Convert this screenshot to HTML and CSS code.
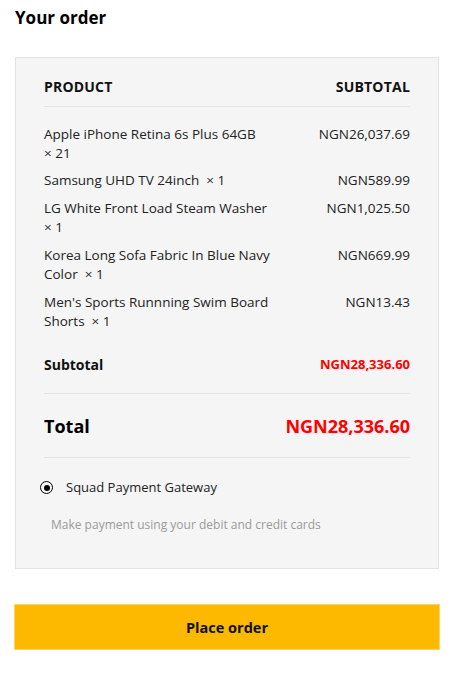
FILE: index.html
```html
<!DOCTYPE html>
<html lang="en">
<head>
<meta charset="utf-8">
<title>Your order</title>
<link rel="stylesheet" href="styles.css">
</head>
<body>
<div class="page">
  <h3 class="title">Your order</h3>
  <div class="review">
    <table class="order-table">
      <colgroup><col class="col-name"><col class="col-total"></colgroup>
      <thead>
        <tr><th class="name">Product</th><th class="total">Subtotal</th></tr>
      </thead>
      <tbody>
        <tr class="item first"><td class="name">Apple iPhone Retina 6s Plus 64GB&nbsp; <span class="qty">×&nbsp;21</span></td><td class="total">NGN26,037.69</td></tr>
        <tr class="item"><td class="name">Samsung UHD TV 24inch&nbsp; <span class="qty">×&nbsp;1</span></td><td class="total">NGN589.99</td></tr>
        <tr class="item"><td class="name">LG White Front Load Steam Washer&nbsp; <span class="qty">×&nbsp;1</span></td><td class="total">NGN1,025.50</td></tr>
        <tr class="item"><td class="name">Korea Long Sofa Fabric In Blue Navy Color&nbsp; <span class="qty">×&nbsp;1</span></td><td class="total">NGN669.99</td></tr>
        <tr class="item last"><td class="name">Men's Sports Runnning Swim Board Shorts&nbsp; <span class="qty">×&nbsp;1</span></td><td class="total">NGN13.43</td></tr>
      </tbody>
      <tfoot>
        <tr class="cart-subtotal"><th class="name">Subtotal</th><td class="total">NGN28,336.60</td></tr>
        <tr class="order-total"><th class="name">Total</th><td class="total">NGN28,336.60</td></tr>
      </tfoot>
    </table>
    <div class="payment">
      <label class="method">
        <span class="radio"><span class="dot"></span></span>
        <span class="method-label">Squad Payment Gateway</span>
      </label>
      <p class="method-desc">Make payment using your debit and credit cards</p>
    </div>
  </div>
  <button class="place-order" type="button">Place order</button>
</div>
</body>
</html>
```

FILE: styles.css
```css
* { box-sizing: border-box; }
html, body { margin: 0; padding: 0; background: #fff; }
body {
  font-family: "Open Sans", "Noto Sans", sans-serif;
  color: #1a1a1a;
  font-size: 13.5px;
}
.page { padding: 0 26px 0 15px; }
.title {
  margin: 0;
  padding-top: 7px;
  font-size: 17px;
  line-height: 22px;
  font-weight: 700;
  color: #000;
}
.review {
  margin-top: 28px;
  background: #f5f5f5;
  border: 1px solid #e2e2e2;
  padding: 0 28px 0 28px;
}
.order-table {
  width: 100%;
  border-collapse: collapse;
  table-layout: fixed;
}
.col-name { width: 234px; }
.col-total { width: auto; }
.order-table th, .order-table td { padding: 0; vertical-align: top; }
.order-table thead th {
  font-size: 14px;
  font-weight: 700;
  text-transform: uppercase;
  color: #111;
  line-height: 19px;
  padding: 19px 0 10px;
  border-bottom: 1px solid #e4e4e4;
  letter-spacing: 0.2px;
}
.order-table .name { text-align: left; }
.order-table .total { text-align: right; }
.item td { line-height: 19.3px; padding: 4.2px 0; color: #222; }
.item.first td { padding-top: 17.5px; }
.item.last td { padding-bottom: 4px; }
.qty { white-space: nowrap; }
.cart-subtotal th, .cart-subtotal td {
  height: 58px;
  vertical-align: middle;
  border-bottom: 1px solid #e4e4e4;
}
.cart-subtotal th { font-size: 14px; font-weight: 700; color: #111; }
.cart-subtotal td { font-size: 13px; font-weight: 700; color: #ff0000; }
.order-total th, .order-total td {
  height: 64px;
  vertical-align: middle;
  border-bottom: 1px solid #e4e4e4;
}
.order-total th { font-size: 18px; font-weight: 700; color: #000; }
.order-total td { font-size: 18px; font-weight: 700; color: #ff0000; }
.payment { padding: 20px 0 34px; }
.method {
  display: flex;
  align-items: center;
  gap: 13px;
  line-height: 19px;
  font-size: 13px;
  color: #222;
  margin-left: -4px;
}
.radio {
  width: 13px;
  height: 13px;
  border: 1.6px solid #000;
  border-radius: 50%;
  display: flex;
  align-items: center;
  justify-content: center;
}
.dot { width: 6px; height: 6px; border-radius: 50%; background: #000; }
.method-desc {
  margin: 19px 0 0 7px;
  font-size: 12px;
  line-height: 18px;
  color: #9a9a9a;
}
.place-order {
  display: block;
  width: calc(100% + 2px);
  margin: 35px 0 0 -1px;
  height: 46px;
  border: 1px solid #fdd468;
  background: #fdb800;
  font-family: inherit;
  font-size: 14.5px;
  font-weight: 700;
  color: #111;
  cursor: pointer;
}
```
